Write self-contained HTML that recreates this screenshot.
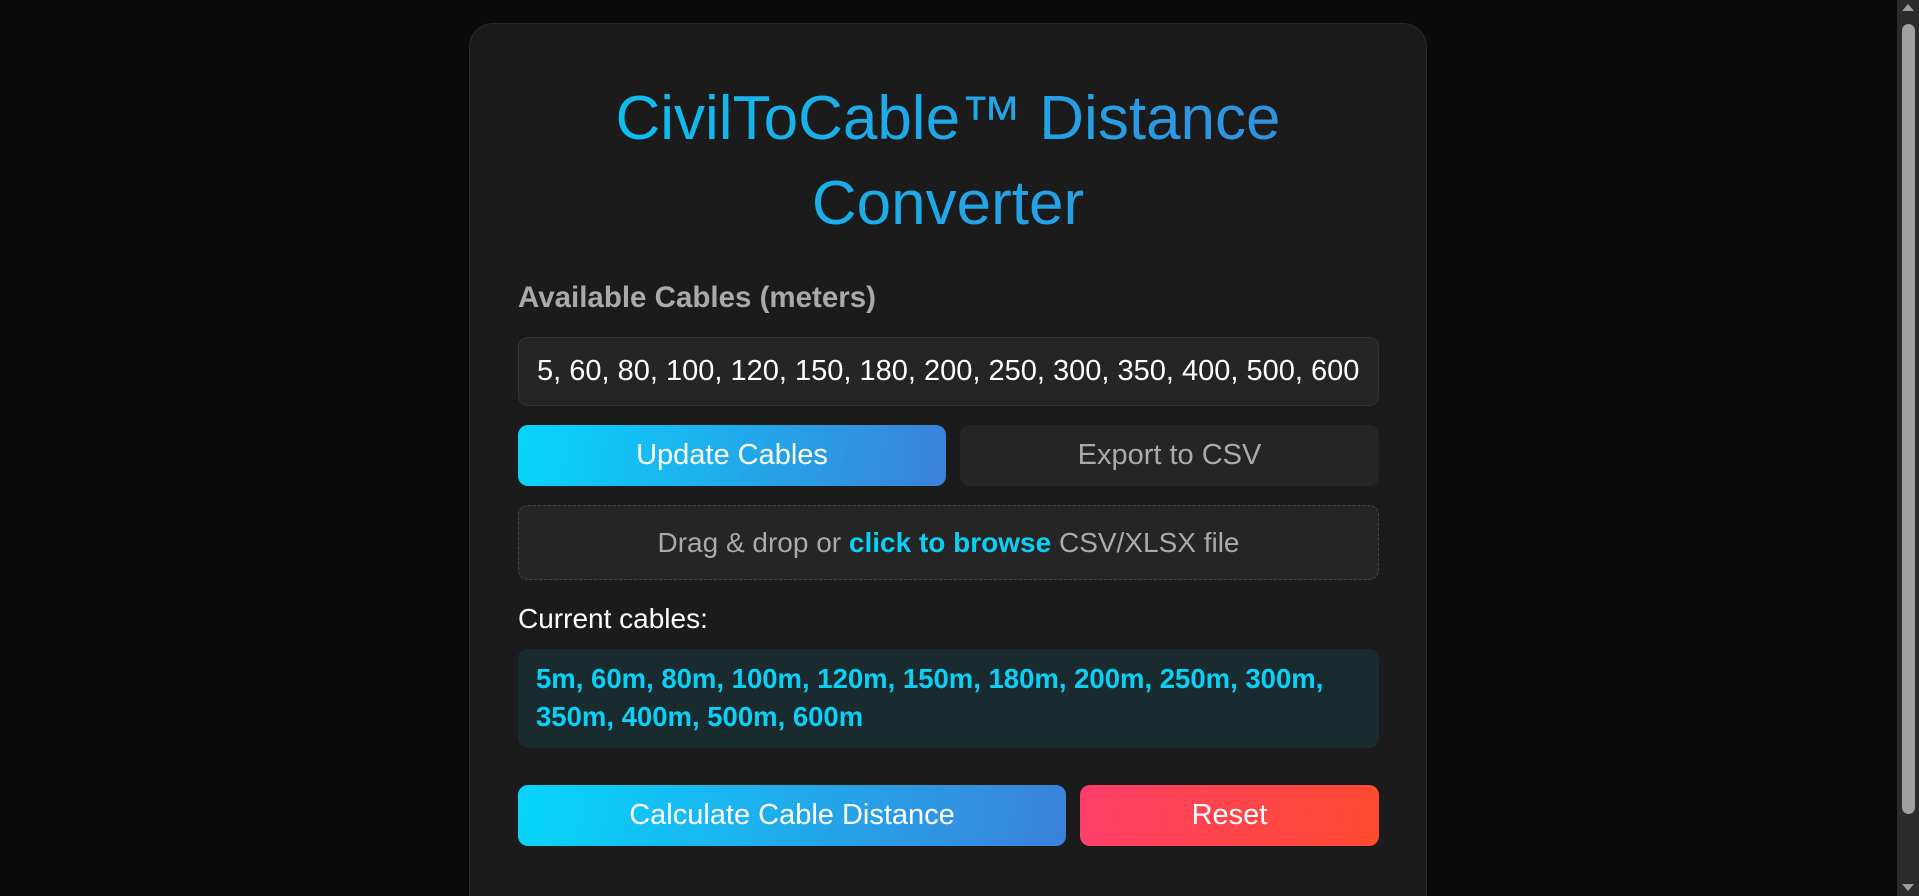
<!DOCTYPE html>
<html><head><meta charset="utf-8"><style>
html,body{margin:0;padding:0;width:1919px;height:896px;overflow:hidden;background:#0a0a0a;font-family:"Liberation Sans",sans-serif}
#w{position:relative;width:1919px;height:896px;overflow:hidden}
.card{position:absolute;left:469px;top:23px;width:958px;height:900px;background:#1b1b1b;border:1px solid #2a2a2a;border-radius:24px;box-sizing:border-box}
.t{position:absolute;left:469px;width:958px;text-align:center;font-size:62px;line-height:70px;background:linear-gradient(90deg,#06c8f2,#3a87dc);-webkit-background-clip:text;color:transparent}
.abs{position:absolute;box-sizing:border-box;white-space:nowrap}
.lab{left:518px;top:281px;font-size:29.5px;font-weight:bold;color:#a9a9a9}
.inp{left:518px;top:337px;width:861px;height:69px;background:#252525;border:1px solid #333;border-radius:10px;color:#fff;font-size:29px;line-height:67px;padding-left:18px}
.btn{border-radius:10px;color:#fff;font-size:29px;text-align:center}
.grad{background:linear-gradient(100deg,#06d6fc,#3b80da)}
.drop{left:518px;top:505px;width:861px;height:75px;border:1px dashed #444;border-radius:10px;background:#252525;color:#aaa;font-size:28px;text-align:center;line-height:73px}
.sb{position:absolute;left:1897px;top:0;width:22px;height:896px;background:#2c2c2c}
</style></head><body><div id="w">
<div class="card"></div>
<div class="t" style="top:84px">CivilToCable™ Distance</div>
<div class="t" style="top:169px">Converter</div>
<div class="abs lab">Available Cables (meters)</div>
<div class="abs inp">5, 60, 80, 100, 120, 150, 180, 200, 250, 300, 350, 400, 500, 600</div>
<div class="abs btn grad" style="left:518px;top:425px;width:428px;height:61px;line-height:61px">Update Cables</div>
<div class="abs btn" style="left:960px;top:425px;width:419px;height:61px;line-height:61px;background:#252525;color:#aaa">Export to CSV</div>
<div class="abs drop">Drag &amp; drop or <b style="color:#0bd0f5">click to browse</b> CSV/XLSX file</div>
<div class="abs" style="left:518px;top:603px;font-size:28px;color:#fff">Current cables:</div>
<div class="abs" style="left:518px;top:649px;width:861px;height:99px;background:#1a2b30;border-radius:10px;color:#0bd0f5;font-size:27.5px;font-weight:bold;line-height:38px;padding:11px 18px;white-space:normal">5m, 60m, 80m, 100m, 120m, 150m, 180m, 200m, 250m, 300m, 350m, 400m, 500m, 600m</div>
<div class="abs btn grad" style="left:518px;top:785px;width:548px;height:61px;line-height:61px">Calculate Cable Distance</div>
<div class="abs btn" style="left:1080px;top:785px;width:299px;height:61px;line-height:61px;background:linear-gradient(100deg,#ff3f6a,#ff4a2e)">Reset</div>
<div class="sb">
<div style="position:absolute;left:5px;top:24px;width:13px;height:790px;background:#9f9f9f;border-radius:7px"></div>
<div style="position:absolute;left:5px;top:4px;width:0;height:0;border-left:6px solid transparent;border-right:6px solid transparent;border-bottom:7px solid #9f9f9f"></div>
<div style="position:absolute;left:5px;top:884px;width:0;height:0;border-left:6px solid transparent;border-right:6px solid transparent;border-top:7px solid #9f9f9f"></div>
</div>
</div></body></html>
